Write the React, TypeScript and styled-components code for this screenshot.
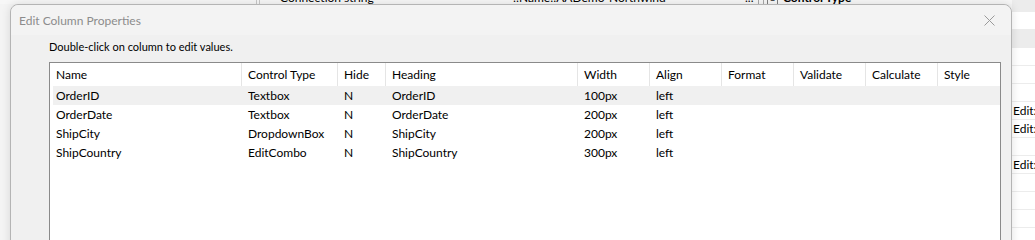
import React from 'react'
import styled, { createGlobalStyle } from 'styled-components'

const GlobalStyle = createGlobalStyle`
  html, body {
    margin: 0;
    padding: 0;
  }
  body {
    font-family: Lato, "Noto Sans", sans-serif;
    font-size: 12px;
    color: #000;
    background: #f4f4f4;
  }
`

const columns = [
  { title: 'Name', width: 192 },
  { title: 'Control Type', width: 96 },
  { title: 'Hide', width: 48 },
  { title: 'Heading', width: 192 },
  { title: 'Width', width: 72 },
  { title: 'Align', width: 72 },
  { title: 'Format', width: 72 },
  { title: 'Validate', width: 72 },
  { title: 'Calculate', width: 72 },
  { title: 'Style', width: 0 },
]

const rows = [
  ['OrderID', 'Textbox', 'N', 'OrderID', '100px', 'left', '', '', '', ''],
  ['OrderDate', 'Textbox', 'N', 'OrderDate', '200px', 'left', '', '', '', ''],
  ['ShipCity', 'DropdownBox', 'N', 'ShipCity', '200px', 'left', '', '', '', ''],
  ['ShipCountry', 'EditCombo', 'N', 'ShipCountry', '300px', 'left', '', '', '', ''],
]

const propRows = [
  { kind: 'category', text: '' },
  { kind: 'row', text: '' },
  { kind: 'category', text: '' },
  { kind: 'row', text: '' },
  { kind: 'row', text: '' },
  { kind: 'row', text: '' },
  { kind: 'row', text: 'Edit:' },
  { kind: 'row', text: 'Edit:' },
  { kind: 'row', text: '' },
  { kind: 'row', text: 'Edit:' },
  { kind: 'row', text: '' },
  { kind: 'row', text: '' },
  { kind: 'row', text: '' },
  { kind: 'row', text: '' },
]

const gridTemplate = columns
  .map((c) => (c.width ? `${c.width}px` : '1fr'))
  .join(' ')

const App = () => {
  return (
    <>
      <GlobalStyle />
      <Screen>
        <Backdrop>
          <LeftArea>
            <TopStrip>
              <StripRow>
                <StripGap $w={256} />
                <Splitter />
                <StripGap $w={20} />
                <StripText $w={233}>Connection string</StripText>
                <StripText $w={232}>::Name::AADemo-Northwind</StripText>
                <StripText $w={13}>...</StripText>
                <DoubleLine />
                <Expander>−</Expander>
                <StripText $bold>Control Type</StripText>
              </StripRow>
            </TopStrip>
          </LeftArea>
          <PropPane>
            {propRows.map((r, i) => (
              <PropRow key={i} $category={r.kind === 'category'}>
                {r.text}
              </PropRow>
            ))}
          </PropPane>
        </Backdrop>

        <Dialog>
          <TitleBar>
            <Title>Edit Column Properties</Title>
            <CloseButton aria-label='Close'>
              <svg width='11' height='11' viewBox='0 0 11 11'>
                <path
                  d='M0.5 0.5 L10.5 10.5 M10.5 0.5 L0.5 10.5'
                  stroke='#9a9a9a'
                  strokeWidth='1'
                  fill='none'
                />
              </svg>
            </CloseButton>
          </TitleBar>
          <Body>
            <Hint>Double-click on column to edit values.</Hint>
            <ListView>
              <HeaderRow>
                {columns.map((c) => (
                  <HeaderCell key={c.title}>{c.title}</HeaderCell>
                ))}
              </HeaderRow>
              {rows.map((r, i) => (
                <DataRow key={i} $hot={i === 0}>
                  {r.map((v, j) => (
                    <Cell key={j}>{v}</Cell>
                  ))}
                </DataRow>
              ))}
            </ListView>
          </Body>
        </Dialog>
      </Screen>
    </>
  )
}

export default App

const Screen = styled.div`
  position: relative;
  width: 1035px;
  height: 240px;
  overflow: hidden;
`

const Backdrop = styled.div`
  display: grid;
  grid-template-columns: 1012px 1fr;
  height: 100%;
`

const LeftArea = styled.div`
  background: #f4f4f4;
`

const TopStrip = styled.div`
  height: 4px;
  overflow: hidden;
  background: #f7f7f7;
`

const StripRow = styled.div`
  display: flex;
  margin-top: -10px;
  height: 16px;
  line-height: 16px;
  white-space: nowrap;
`

const StripGap = styled.div<{ $w: number }>`
  width: ${(p) => p.$w}px;
  flex: none;
`

const Splitter = styled.div`
  width: 2px;
  flex: none;
  border-left: 1px solid #c8c8c8;
  border-right: 1px solid #c8c8c8;
`

const StripText = styled.div<{ $w?: number; $bold?: boolean }>`
  width: ${(p) => (p.$w ? `${p.$w}px` : 'auto')};
  flex: none;
  font-weight: ${(p) => (p.$bold ? 700 : 400)};
  color: #000;
`

const DoubleLine = styled.div`
  width: 4px;
  flex: none;
  margin-right: 3px;
  border-left: 1px solid #a8a8a8;
  border-right: 1px solid #a8a8a8;
`

const Expander = styled.div`
  width: 9px;
  height: 9px;
  margin-top: 6px;
  margin-right: 5px;
  flex: none;
  border: 1px solid #808080;
  font-size: 9px;
  line-height: 8px;
  text-align: center;
`

const PropPane = styled.div`
  display: flex;
  flex-direction: column;
  margin-top: -6px;
  background: #fff;
`

const PropRow = styled.div<{ $category: boolean }>`
  height: 18px;
  flex: none;
  box-sizing: border-box;
  padding-left: 1px;
  line-height: 18px;
  white-space: nowrap;
  overflow: hidden;
  background: ${(p) => (p.$category ? '#ececec' : '#fff')};
  border-bottom: 1px solid #ececec;
`

const Dialog = styled.div`
  position: absolute;
  left: 10px;
  top: 4px;
  width: 1002px;
  height: 270px;
  box-sizing: border-box;
  background: #f0f0f0;
  border: 1px solid #b4b4b4;
  border-radius: 8px 8px 0 0;
  box-shadow: 0 0 10px rgba(0, 0, 0, 0.12);
  display: flex;
  flex-direction: column;
`

const TitleBar = styled.div`
  height: 30px;
  flex: none;
  display: flex;
  align-items: center;
  justify-content: space-between;
  padding-left: 8px;
  background: #f3f3f3;
  border-radius: 8px 8px 0 0;
`

const Title = styled.div`
  color: #8c8c8c;
  font-size: 12px;
`

const CloseButton = styled.div`
  width: 46px;
  height: 30px;
  display: flex;
  align-items: center;
  justify-content: center;
  margin-right: -1px;
`

const Body = styled.div`
  display: flex;
  flex-direction: column;
  padding: 4px 10px 0 38px;
`

const Hint = styled.div`
  font-size: 11px;
  line-height: 16px;
  height: 16px;
  margin-bottom: 7px;
`

const ListView = styled.div`
  height: 200px;
  background: #fff;
  border: 1px solid #8a8a8a;
`

const HeaderRow = styled.div`
  display: grid;
  grid-template-columns: ${gridTemplate};
  height: 23px;
`

const HeaderCell = styled.div`
  padding-left: 6px;
  line-height: 23px;
  border-right: 1px solid #e5e5e5;
  white-space: nowrap;

  &:last-child {
    border-right: none;
  }
`

const DataRow = styled.div<{ $hot: boolean }>`
  display: grid;
  grid-template-columns: ${gridTemplate};
  height: 19px;
  background: ${(p) =>
    p.$hot
      ? 'linear-gradient(to right, transparent 3px, #f0f0f0 3px)'
      : 'transparent'};
`

const Cell = styled.div`
  padding-left: 6px;
  line-height: 19px;
  white-space: nowrap;
  overflow: hidden;
`
